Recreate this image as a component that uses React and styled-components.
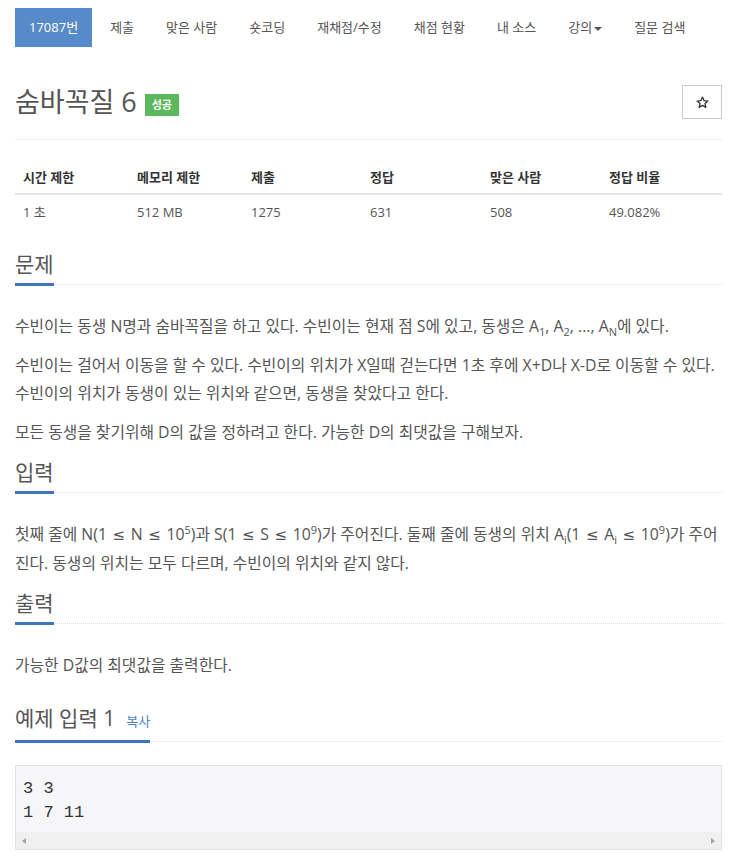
import React from "react";
import styled, { createGlobalStyle } from "styled-components";

const GlobalStyle = createGlobalStyle`
  body {
    margin: 0;
    background: #fff;
    color: #555;
    font-family: "Open Sans", "Noto Sans CJK KR", sans-serif;
  }
`;

const Page = styled.div`
  width: 743px;
  padding: 8px 21px 0 15px;
  box-sizing: border-box;
`;

const Nav = styled.ul`
  display: flex;
  margin: 0;
  padding: 0;
  list-style: none;
`;

const NavItem = styled.li`
  height: 39px;
  line-height: 39px;
  padding: 0 ${(p) => (p.active ? "14px" : "16px")};
  margin-right: ${(p) => (p.active ? "2px" : "0")};
  font-size: 13px;
  color: ${(p) => (p.active ? "#fff" : "#555")};
  background: ${(p) => (p.active ? "#568ac8" : "transparent")};
  white-space: nowrap;
`;

const Caret = styled.span`
  display: inline-block;
  margin-left: 2px;
  vertical-align: middle;
  border-top: 4px solid #555;
  border-left: 4px solid transparent;
  border-right: 4px solid transparent;
`;

const TitleRow = styled.div`
  display: flex;
  align-items: center;
  justify-content: space-between;
  margin-top: 38px;
  padding-bottom: 20px;
  border-bottom: 1px solid #eee;
`;

const Title = styled.h1`
  display: flex;
  align-items: center;
  margin: 0;
  font-size: 27px;
  font-weight: 400;
  color: #555;
  line-height: 34px;
`;

const Badge = styled.span`
  margin-left: 8px;
  margin-top: 6px;
  width: 34px;
  text-align: center;
  height: 22px;
  line-height: 22px;
  font-size: 11px;
  font-weight: 700;
  color: #fff;
  background: #5cb85c;
`;

const StarButton = styled.button`
  display: flex;
  align-items: center;
  justify-content: center;
  width: 40px;
  height: 34px;
  border: 1px solid #ccc;
  background: #fff;
  padding: 0;
`;

const InfoTable = styled.table`
  width: 100%;
  margin-top: 20px;
  border-collapse: collapse;
  table-layout: fixed;
  font-size: 13px;
`;

const Th = styled.th`
  box-sizing: border-box;
  width: ${(p) => p.w}px;
  padding: 0 8px;
  height: 34px;
  text-align: left;
  font-weight: 700;
  color: #333;
  border-bottom: 2px solid #e6e6e6;
`;

const Td = styled.td`
  padding: 0 8px;
  height: 33px;
  color: #555;
`;

const Section = styled.section`
  margin-top: ${(p) => p.top}px;
`;

const Headline = styled.div`
  display: flex;
  border-bottom: 1px dotted #ddd;
`;

const H2 = styled.h2`
  display: flex;
  align-items: baseline;
  margin: 0 0 -2px;
  padding-bottom: 4px;
  font-size: 21px;
  font-weight: 400;
  color: #555;
  line-height: 30px;
  border-bottom: 3px solid #3d75bb;
`;

const CopyLink = styled.span`
  margin-left: 11px;
  font-size: 13px;
  color: #4b83c6;
`;

const Body = styled.div`
  padding-top: 27px;
  font-size: 15.8px;
  line-height: 28px;
  color: #555;

  p {
    margin: 0 0 11px;
  }
  sub,
  sup {
    font-size: 11px;
    line-height: 0;
  }
`;

const Le = styled.span`
  margin: 0 1.5px;
  font-family: "DejaVu Sans", sans-serif;
  font-size: 15px;
`;

const SampleBox = styled.div`
  margin-top: 23px;
  border: 1px solid #e3e3e3;
  background: #f6f6f8;
`;

const Pre = styled.pre`
  margin: 0;
  padding: 11px 7px 7px;
  font-family: "Liberation Mono", monospace;
  font-size: 17px;
  line-height: 24px;
  color: #333;
`;

const ScrollTrack = styled.div`
  display: flex;
  align-items: center;
  justify-content: space-between;
  height: 17px;
  padding: 0 6px;
  background: #f0f0f0;
`;

const Arrow = styled.span`
  width: 0;
  height: 0;
  border-top: 3px solid transparent;
  border-bottom: 3px solid transparent;
  ${(p) =>
    p.left ? "border-right: 4px solid #a3a3a3;" : "border-left: 4px solid #a3a3a3;"}
`;

const StarIcon = () => (
  <svg width="13" height="13" viewBox="0 0 24 24" fill="none" stroke="#333" strokeWidth="2.4" strokeLinejoin="round">
    <polygon points="12,2 14.9,8.6 22,9.3 16.6,14 18.2,21 12,17.3 5.8,21 7.4,14 2,9.3 9.1,8.6" />
  </svg>
);

const navItems = [
  "제출",
  "맞은 사람",
  "숏코딩",
  "재채점/수정",
  "채점 현황",
  "내 소스",
];

const stats = [
  ["시간 제한", "1 초", 114],
  ["메모리 제한", "512 MB", 114],
  ["제출", "1275", 119],
  ["정답", "631", 120],
  ["맞은 사람", "508", 119],
  ["정답 비율", "49.082%", 121],
];

export default function App() {
  return (
    <Page>
      <GlobalStyle />
      <Nav>
        <NavItem active>17087번</NavItem>
        {navItems.map((n) => (
          <NavItem key={n}>{n}</NavItem>
        ))}
        <NavItem>
          강의
          <Caret />
        </NavItem>
        <NavItem>질문 검색</NavItem>
      </Nav>

      <TitleRow>
        <Title>
          숨바꼭질 6<Badge>성공</Badge>
        </Title>
        <StarButton>
          <StarIcon />
        </StarButton>
      </TitleRow>

      <InfoTable>
        <thead>
          <tr>
            {stats.map(([h, , w]) => (
              <Th key={h} w={w}>
                {h}
              </Th>
            ))}
          </tr>
        </thead>
        <tbody>
          <tr>
            {stats.map(([h, v]) => (
              <Td key={h}>{v}</Td>
            ))}
          </tr>
        </tbody>
      </InfoTable>

      <Section top={21}>
        <Headline>
          <H2>문제</H2>
        </Headline>
        <Body>
          <p>
            수빈이는 동생 N명과 숨바꼭질을 하고 있다. 수빈이는 현재 점 S에
            있고, 동생은 A<sub>1</sub>, A<sub>2</sub>, ..., A<sub>N</sub>에
            있다.
          </p>
          <p>
            수빈이는 걸어서 이동을 할 수 있다. 수빈이의 위치가 X일때 걷는다면
            1초 후에 X+D나 X-D로 이동할 수 있다. 수빈이의 위치가 동생이 있는
            위치와 같으면, 동생을 찾았다고 한다.
          </p>
          <p>모든 동생을 찾기위해 D의 값을 정하려고 한다. 가능한 D의 최댓값을 구해보자.</p>
        </Body>
      </Section>

      <Section top={4}>
        <Headline>
          <H2>입력</H2>
        </Headline>
        <Body>
          <p>
            첫째 줄에 N(1 <Le>≤</Le> N <Le>≤</Le> 10<sup>5</sup>)과 S(1{" "}
            <Le>≤</Le> S <Le>≤</Le> 10<sup>9</sup>)가 주어진다. 둘째 줄에
            동생의 위치 A<sub>i</sub>(1 <Le>≤</Le> A<sub>i</sub> <Le>≤</Le>{" "}
            10<sup>9</sup>)가 주어진다. 동생의 위치는 모두 다르며, 수빈이의
            위치와 같지 않다.
          </p>
        </Body>
      </Section>

      <Section top={3}>
        <Headline>
          <H2>출력</H2>
        </Headline>
        <Body>
          <p>가능한 D값의 최댓값을 출력한다.</p>
        </Body>
      </Section>

      <Section top={24}>
        <Headline>
          <H2>
            예제 입력 1<CopyLink>복사</CopyLink>
          </H2>
        </Headline>
        <SampleBox>
          <Pre>{"3 3\n1 7 11"}</Pre>
          <ScrollTrack>
            <Arrow left />
            <Arrow />
          </ScrollTrack>
        </SampleBox>
      </Section>
    </Page>
  );
}
